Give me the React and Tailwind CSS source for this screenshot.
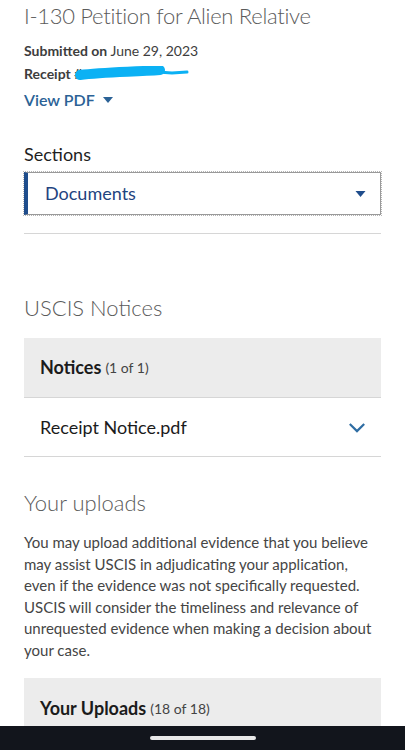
import React from 'react';

// case details page - documents section
const font = { fontFamily: 'Lato, "Open Sans", sans-serif' };

const CaretDown = ({ className }) => (
  <svg viewBox="0 0 10 6" className={className} fill="currentColor">
    <path d="M0 0h10L5 6z" />
  </svg>
);

const Chevron = () => (
  <svg viewBox="0 0 20 12" className="w-[18px] h-[11px] text-[#2f6da3]" fill="none" stroke="currentColor" strokeWidth="2.4">
    <path d="M2 2l8 8 8-8" />
  </svg>
);

export default function App() {
  return (
    <div className="w-[405px] h-[750px] bg-white flex flex-col overflow-hidden" style={font}>
      <div className="flex-1 px-6 overflow-hidden">
        <h1 className="text-[22px] tracking-[-0.3px] font-light text-[#5b5b5b] leading-[32px]">
          I-130 Petition for Alien Relative
        </h1>

        <div className="mt-[9px] text-[14px] text-[#3d3d3d] leading-5">
          <p>
            <span className="font-bold">Submitted on</span> June 29, 2023
          </p>
          <p className="mt-[3px] flex items-center">
            <span className="font-bold">Receipt #</span>
            <svg viewBox="0 0 116 16" className="w-[116px] h-[16px] -ml-2">
              <path d="M6 9 C30 6 60 6 86 4" stroke="#0bb1f4" strokeWidth="10" strokeLinecap="round" fill="none" />
              <path d="M84 6 L98 7 L113 6" stroke="#0bb1f4" strokeWidth="3" strokeLinecap="round" fill="none" />
            </svg>
          </p>
        </div>

        <div className="mt-1 h-6 flex items-center gap-2 text-[16px] text-[#2b6296] font-semibold">
          View PDF
          <CaretDown className="w-[10px] h-[6px]" />
        </div>

        <p className="mt-[30px] text-[18px] text-[#1f1f1f] leading-6">Sections</p>

        <div className="mt-[6px] outline-1 outline-dotted outline-[#b5b5b5] outline-offset-0">
          <div className="h-[43px] border border-[#9a9a9a] border-l-4 border-l-[#1f4d8c] flex items-center justify-between pl-[17px] pr-[14px]">
            <span className="text-[18px] text-[#1f4480]">Documents</span>
            <CaretDown className="w-[11px] h-[6px] text-[#1f4d8c]" />
          </div>
        </div>

        <div className="mt-[18px] border-t border-[#d6d6d6]" />

        <h2 className="mt-[60px] text-[22px] font-light text-[#5b5b5b] leading-7">USCIS Notices</h2>

        <div className="mt-[16px] bg-[#ececec] h-[59px] flex items-center px-4">
          <span className="text-[18px] font-bold text-[#1b1b1b]">Notices</span>
          <span className="ml-1 text-[14px] text-[#444]">(1 of 1)</span>
        </div>
        <div className="h-[60px] border-t border-b border-[#d6d6d6] flex items-center justify-between pl-4 pr-[15px]">
          <span className="text-[18px] text-[#1b1b1b]">Receipt Notice.pdf</span>
          <Chevron />
        </div>

        <h2 className="mt-[32px] text-[22px] font-light text-[#5b5b5b] leading-7">Your uploads</h2>

        <p className="mt-[15px] text-[15px] leading-[21.5px] text-[#454545]">
          You may upload additional evidence that you believe may assist USCIS in adjudicating your application,
          even if the evidence was not specifically requested. USCIS will consider the timeliness and relevance of
          unrequested evidence when making a decision about your case.
        </p>

        <div className="mt-[17px] bg-[#ececec] h-[60px] flex items-center px-4">
          <span className="text-[18px] font-bold text-[#1b1b1b]">Your Uploads</span>
          <span className="ml-1 text-[14px] text-[#444]">(18 of 18)</span>
        </div>
      </div>

      <div className="h-[24px] bg-[#12151c] flex items-center justify-center">
        <div className="w-[106px] h-[4px] rounded-full bg-[#e8e8e8]" />
      </div>
    </div>
  );
}
